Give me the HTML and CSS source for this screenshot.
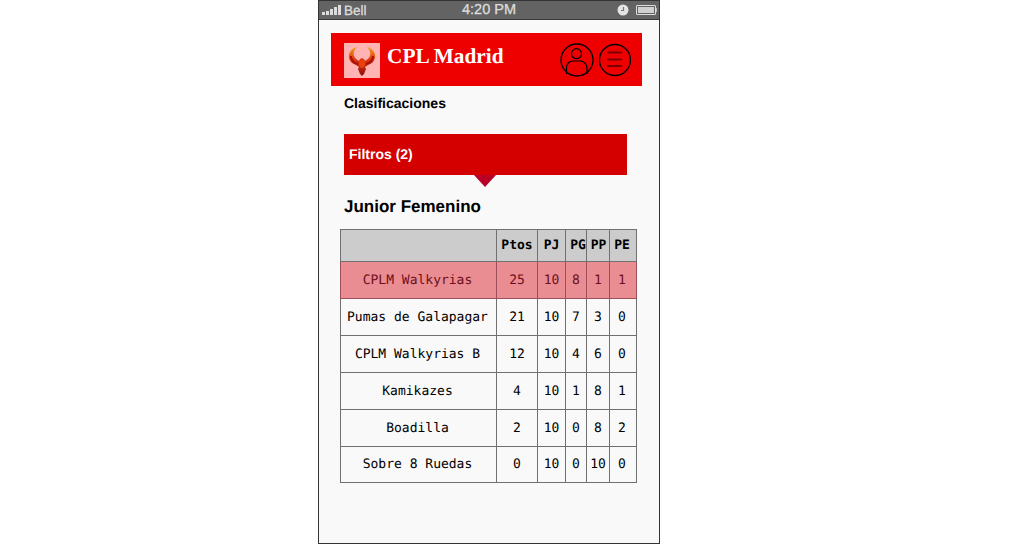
FILE: index.html
```html
<!DOCTYPE html>
<html lang="es">
<head>
    <meta charset="UTF-8">
    <title>CPL Madrid - Clasificaciones</title>
    <link rel="stylesheet" href="styles.css">
</head>
<body>
    <div class="phone">
        <div class="status-bar">
            <div class="status-left">
                <span class="signal"><i></i><i></i><i></i><i></i><i></i></span>
                <span>Bell</span>
            </div>
            <div class="status-time">4:20 PM</div>
            <div class="status-right">
                <svg class="clock" width="12" height="12" viewBox="0 0 12 12"><circle cx="6" cy="6" r="5.500" fill="#e4e4e4"/><path d="M6.500 3V6.500H4" fill="none" stroke="#777" stroke-width="1.200"/></svg>
                <span class="battery-wrap">
                    <span class="battery"><span class="battery-fill"></span></span>
                    <span class="battery-tip"></span>
                </span>
            </div>
        </div>

        <div class="header">
            <div class="logo">
                <svg width="28" height="30" viewBox="0 0 28 30">
                    <defs>
                        <linearGradient id="fire" x1="0" y1="0" x2="0" y2="1">
                            <stop offset="0" stop-color="#f5a01a"/>
                            <stop offset="0.45" stop-color="#e2330c"/>
                            <stop offset="1" stop-color="#8a1010"/>
                        </linearGradient>
                    </defs>
                    <!-- wings, body and tail of the phoenix -->
                    <path d="M9 1C4 2 0 7 1 12c1 4 4 6 7 7l3 2-1 2 2 5 2 2 2-2 2-5-1-2 3-2c3-1 6-3 7-7 1-5-3-10-8-11 3 3 4 6 3 9-1 2-3 4-5 5l-1-2-2-1-2 1-1 2c-2-1-4-3-5-5-1-3 0-6 3-9z" fill="url(#fire)"/>
                    <path d="M3 10c0 4 3 7 7 8M25 10c0 4-3 7-7 8" fill="none" stroke="#a81208" stroke-width="2"/>
                    <ellipse cx="14" cy="18" rx="3" ry="4" fill="#e8400e"/>
                </svg>
            </div>
            <div class="title">CPL Madrid</div>
            <div class="header-icons">
                <svg width="34" height="34" viewBox="0 0 34 34">
                    <circle cx="17" cy="17" r="16" fill="none" stroke="#000" stroke-width="1.300"/>
                    <circle cx="16.500" cy="10.700" r="5" fill="none" stroke="#000" stroke-width="1.200"/>
                    <path d="M6.500 31V25c0-4 3-7 6-7h8c3 0 6.500 3 6.500 7v6" fill="none" stroke="#000" stroke-width="1.200"/>
                </svg>
                <svg width="32" height="34" viewBox="0 0 32 34">
                    <circle cx="16" cy="17" r="15.500" fill="none" stroke="#000" stroke-width="1.300"/>
                    <path d="M8 9.500H23M8 16.500H23M8 23H23" fill="none" stroke="#7a0000" stroke-width="1.800"/>
                </svg>
            </div>
        </div>

        <div class="section-title">Clasificaciones</div>

        <div class="filters">Filtros (2)</div>
        <div class="filters-arrow"></div>

        <h2 class="category">Junior Femenino</h2>

        <table class="standings">
            <thead>
                <tr>
                    <th class="col-team"></th>
                    <th class="col-ptos">Ptos</th>
                    <th class="col-pj">PJ</th>
                    <th class="col-pg">PG</th>
                    <th class="col-pp">PP</th>
                    <th class="col-pe">PE</th>
                </tr>
            </thead>
            <tbody>
                <tr class="own-team"><td>CPLM Walkyrias</td><td>25</td><td>10</td><td>8</td><td>1</td><td>1</td></tr>
                <tr><td>Pumas de Galapagar</td><td>21</td><td>10</td><td>7</td><td>3</td><td>0</td></tr>
                <tr><td>CPLM Walkyrias B</td><td>12</td><td>10</td><td>4</td><td>6</td><td>0</td></tr>
                <tr><td>Kamikazes</td><td>4</td><td>10</td><td>1</td><td>8</td><td>1</td></tr>
                <tr><td>Boadilla</td><td>2</td><td>10</td><td>0</td><td>8</td><td>2</td></tr>
                <tr class="last-row"><td>Sobre 8 Ruedas</td><td>0</td><td>10</td><td>0</td><td>10</td><td>0</td></tr>
            </tbody>
        </table>
    </div>
</body>
</html>
```
FILE: styles.css
```css
html, body {
    margin: 0;
    padding: 0;
    background-color: #fff;
}
.phone {
    box-sizing: border-box;
    width: 342px;
    height: 544px;
    margin-left: 318px;
    border: 1px solid #333;
    background-color: #f9f9f9;
    font-family: "Liberation Sans", Arial, sans-serif;
    color: #000;
    overflow: hidden;
    text-rendering: geometricPrecision;
}
.status-bar {
    display: flex;
    align-items: center;
    justify-content: space-between;
    height: 18px;
    padding: 0 3px;
    background-color: #636363;
    border-bottom: 1px solid #3a3a3a;
    color: #dcdcdc;
    font-size: 13.500px;
    -webkit-text-stroke: 0.3px #dcdcdc;
    position: relative;
}
.status-left {
    display: flex;
    align-items: center;
    gap: 3px;
}
.signal {
    display: flex;
    align-items: flex-end;
    gap: 1px;
    height: 10px;
}
.signal i {
    display: block;
    width: 3px;
    background-color: #dcdcdc;
}
.signal i:nth-child(1) { height: 3px; }
.signal i:nth-child(2) { height: 4px; }
.signal i:nth-child(3) { height: 6px; }
.signal i:nth-child(4) { height: 8px; }
.signal i:nth-child(5) { height: 10px; }
.status-time {
    position: absolute;
    left: 143px;
    top: 1px;
    font-size: 14.500px;
    line-height: 17px;
}
.status-right {
    display: flex;
    align-items: center;
    gap: 7px;
}
.battery-wrap {
    display: flex;
    align-items: center;
    margin-right: -1px;
}
.battery {
    display: block;
    box-sizing: border-box;
    width: 20px;
    height: 10px;
    padding: 1px;
    border: 1px solid #dcdcdc;
    border-radius: 1px;
}
.battery-fill {
    display: block;
    height: 100%;
    background-color: #d0d0d0;
}
.battery-tip {
    display: block;
    width: 1px;
    height: 4px;
    background-color: #bbb;
}
.header {
    display: flex;
    align-items: flex-start;
    height: 53px;
    margin: 13px 17px 0 12px;
    padding-left: 13px;
    background-color: #ee0000;
}
.logo {
    display: flex;
    align-items: center;
    justify-content: center;
    flex: none;
    width: 36px;
    height: 35px;
    margin-top: 10px;
    background-color: #ffb3b3;
}
.title {
    margin: 9px 0 0 7px;
    font-family: "Liberation Serif", "Times New Roman", serif;
    font-weight: bold;
    font-size: 21.300px;
    line-height: 28px;
    color: #fff;
}
.header-icons {
    display: flex;
    gap: 5px;
    margin: 10px 11px 0 auto;
}
.section-title {
    margin: 8px 0 0 25px;
    font-size: 14px;
    font-weight: bold;
    line-height: 18px;
}
.filters {
    box-sizing: border-box;
    width: 283px;
    height: 41px;
    margin: 22px 0 0 25px;
    padding-left: 5px;
    background-color: #d40000;
    color: #fff;
    font-size: 14px;
    font-weight: bold;
    line-height: 41px;
}
.filters-arrow {
    width: 0;
    height: 0;
    margin-left: 155px;
    border-left: 11px solid transparent;
    border-right: 11px solid transparent;
    border-top: 12px solid #bb0028;
}
.category {
    margin: 10px 0 0 25px;
    font-size: 17px;
    font-weight: bold;
    line-height: 20px;
}
.standings {
    table-layout: fixed;
    width: 297px;
    margin: 12px 0 0 21px;
    border-collapse: collapse;
    font-family: "DejaVu Sans Mono", monospace;
    font-size: 13px;
}
.standings th,
.standings td {
    padding: 0;
    border: 1px solid #707070;
    text-align: center;
    white-space: nowrap;
}
.standings th {
    height: 31px;
    background-color: #cccccc;
    font-weight: bold;
}
.standings th:last-child,
.standings td:last-child,
.standings td:first-child {
    padding-right: 2px;
}
.standings td {
    height: 36px;
    background-color: #f9f9f9;
}
.standings .last-row td {
    height: 35px;
}
.standings .own-team td {
    background-color: #ea8d92;
    color: #6e0f1c;
    border-color: #9c4f58;
}
.col-team { width: 155px; }
.col-ptos { width: 40px; }
.col-pj { width: 27px; }
.standings .col-pg { width: 16px; padding-left: 4px; }
.standings .col-pp { width: 21px; padding-left: 1px; }
.col-pe { width: 24px; }
```
